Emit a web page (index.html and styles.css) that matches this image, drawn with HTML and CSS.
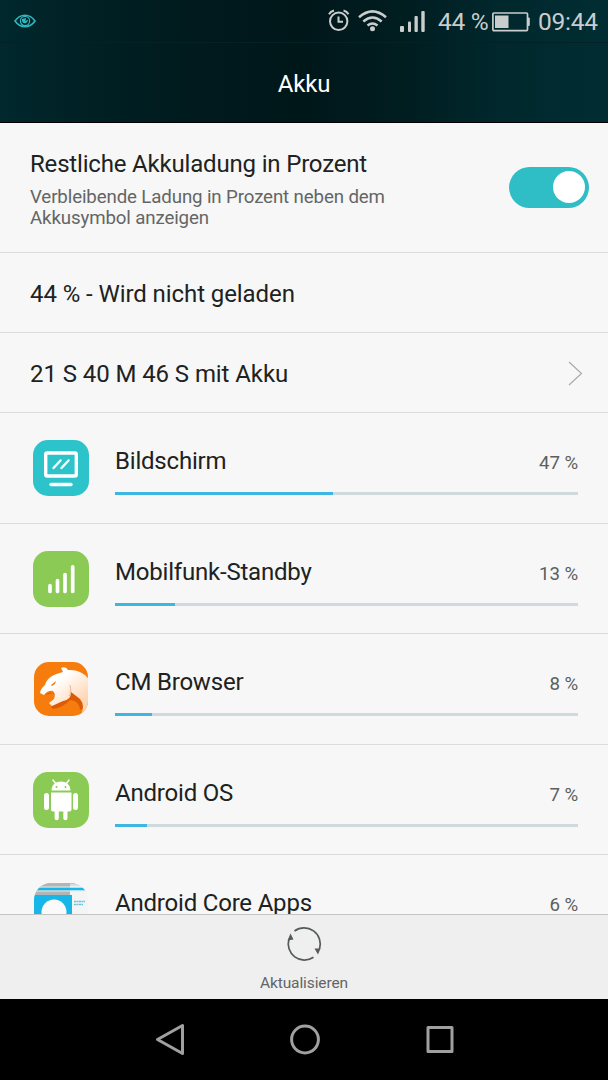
FILE: index.html
```html
<!DOCTYPE html>
<html lang="de">
<head>
<meta charset="utf-8">
<title>Akku</title>
<link rel="stylesheet" href="styles.css">
</head>
<body>
<div class="screen">
  <header class="top">
    <div class="status">
      <svg class="eye" width="22" height="14" viewBox="0 0 22 14" fill="none" stroke="#2fb8c2" stroke-width="1.600"><path d="M1 7Q5 1.300 11 1.300T21 7Q17 12.700 11 12.700T1 7Z"/><circle cx="11" cy="7" r="4.600" stroke-width="1.200"/><path d="M8 5q-.5 4.500 3.500 4.200Q14 8.500 14 5.500L11.500 7 12 4Z" fill="#2fb8c2" stroke="none"/></svg>
      <svg class="alarm" width="22" height="23" viewBox="0 0 22 23" fill="none" stroke="#c9cdcd" stroke-width="2"><circle cx="10.700" cy="12.300" r="8.700"/><path d="M10.500 7.500v5.300h4.500M1 5.200Q2.500 2.300 6 1.500M15.500 1.500Q19 2.300 20.500 5.200"/></svg>
      <svg class="wifi" width="29" height="22" viewBox="0 0 29 22" fill="none" stroke="#c9cdcd" stroke-width="2.500"><path d="M1 7.300Q14.500-4.500 28 7.300M5.300 11.500Q14.500 3.500 23.700 11.500M9.500 15.500Q14.500 11.500 19.500 15.500"/><circle cx="14.500" cy="18.700" r="2.500" fill="#c9cdcd" stroke="none"/></svg>
      <svg class="signal" width="25" height="21" viewBox="0 0 25 21" fill="#c9cdcd"><rect y="15" width="4" height="6" rx="1"/><rect x="8" y="10.500" width="3" height="10.500" rx="1"/><rect x="14.500" y="5" width="3.300" height="16" rx="1"/><rect x="21.300" width="3.400" height="21" rx="1"/></svg>
      <span class="charge">44 %</span>
      <svg class="battery" width="38" height="20" viewBox="0 0 38 20"><rect x=".9" y="1" width="34.600" height="17.600" rx="1" fill="none" stroke="#c9cdcd" stroke-width="1.700"/><rect x="3" y="3.500" width="13.500" height="12.500" fill="#c9cdcd"/><rect x="35.500" y="5.500" width="2.300" height="8.500" rx="1" fill="#c9cdcd"/></svg>
      <span class="clock">09:44</span>
    </div>
    <h1 class="title">Akku</h1>
  </header>
  <main class="list">
    <section class="setting">
      <div>
        <div class="label">Restliche Akkuladung in Prozent</div>
        <div class="hint">Verbleibende Ladung in Prozent neben dem<br>Akkusymbol anzeigen</div>
      </div>
      <div class="toggle"><div class="knob"></div></div>
    </section>
    <section class="line charge-state"><span class="label">44 % - Wird nicht geladen</span></section>
    <section class="line runtime"><span class="label">21 S 40 M 46 S mit Akku</span>
      <svg width="15" height="25" viewBox="0 0 15 25" fill="none" stroke="#aaa" stroke-width="1.200"><path d="M1 1 13.500 12.500 1 24"/></svg></section>

    <section class="usage">
      <svg class="icon" width="56" height="56" viewBox="0 0 56 56"><rect width="56" height="56" rx="15" fill="#2dc3ca"/><g fill="none" stroke="#fff" stroke-width="3.400" stroke-linecap="round" stroke-linejoin="round"><rect x="12.700" y="13" width="30.600" height="23" rx="1.500"/><path d="M18 44.500h20"/><path d="m20.500 28 7-7.500M28.500 28l7-7.500" stroke-width="2.400"/></g></svg>
      <div class="detail"><div class="row"><span class="label">Bildschirm</span><span class="value">47 %</span></div><div class="bar"><div class="fill" style="width:47%"></div></div></div>
    </section>
    <section class="usage">
      <svg class="icon" width="56" height="56" viewBox="0 0 56 56"><rect width="56" height="56" rx="15" fill="#8aca55"/><path d="M17 34.500v6M24.500 29.500v11M32 23.500v17M39.700 15.800v24.700" stroke="#fff" stroke-width="3.700" stroke-linecap="round"/></svg>
      <div class="detail"><div class="row"><span class="label">Mobilfunk-Standby</span><span class="value">13 %</span></div><div class="bar"><div class="fill" style="width:13%"></div></div></div>
    </section>
    <section class="usage">
      <svg class="icon" width="56" height="56" viewBox="0 0 56 56">
        <defs><clipPath id="cm"><rect x="1" y="1" width="54" height="54" rx="15"/></clipPath><linearGradient id="fur" x1="0" y1="0" x2=".8" y2="1"><stop offset=".35" stop-color="#fff"/><stop offset=".85" stop-color="#ffd6b3"/></linearGradient></defs>
        <g clip-path="url(#cm)"><path fill="#f67c0e" d="M0 0h56v56H0z"/><path fill="#dc5b06" d="M12 34Q18 29 22 34L24 39 18 46 20 48Q31 46 37 39 46 39 47 49L52 47 50 37 38 28Z"/><path fill="url(#fur)" d="M7 32Q8 27 12 24 14 17 21 14 26 12 30 11L28 7Q33 5 35 9 47 8 55 17V47L47 56Q53 45 47 38L38 31Q38 39 30 40L19 45 16 42 21 38Q23 33 20 30 15 29 11 34Z"/><path fill="#f67c0e" d="m18 24 5-4-1 3-3 2Z"/><path fill="none" stroke="#f5b585" d="M37 24Q39 32 36 35"/></g></svg>
      <div class="detail"><div class="row"><span class="label">CM Browser</span><span class="value">8 %</span></div><div class="bar"><div class="fill" style="width:8%"></div></div></div>
    </section>
    <section class="usage">
      <svg class="icon" width="56" height="56" viewBox="0 0 56 56"><rect width="56" height="56" rx="15" fill="#8aca55"/><g fill="#fff"><path d="M18.500 18.500C18.500 6.500 37.500 6.500 37.500 18.500ZM18 20.500h20.500v17q0 2-2 2H34.500v6.700a2 2 0 0 1-4.200 0v-6.700h-4.500v6.700a2 2 0 0 1-4.200 0v-6.700H20q-2 0-2-2Z"/><rect x="11" y="21" width="5" height="17" rx="2.500"/><rect x="40" y="21" width="5" height="17" rx="2.500"/></g><path d="m20 8 3 4M36 8l-3 4" stroke="#fff" stroke-width="1.500" stroke-linecap="round"/><g fill="#8aca55"><circle cx="23.500" cy="15" r="1"/><circle cx="32.500" cy="15" r="1"/></g></svg>
      <div class="detail"><div class="row"><span class="label">Android OS</span><span class="value">7 %</span></div><div class="bar"><div class="fill" style="width:7%"></div></div></div>
    </section>
    <section class="usage">
      <svg class="icon" width="56" height="56" viewBox="0 0 56 56"><defs><clipPath id="core"><rect x="1" y="1" width="54" height="54" rx="17"/></clipPath></defs><g clip-path="url(#core)"><path fill="#f3f4f4" d="M0 0h56v56H0z"/><path fill="#b1b5b5" d="M0 0h37v13H0z"/><path fill="#d8dddd" d="M37 0h19v4H37z"/><path fill="#16b6e9" d="M0 5.500h56v3H0zM0 13h39v43H0z"/><path fill="#e2eef1" d="M0 4.500h56v1H0zM0 8.500h56v1H0z"/><circle cx="21" cy="30" r="12.500" fill="#fafafa"/><path stroke="#60c5dc" stroke-width="1.500" stroke-dasharray="2 .5" d="M41 19.500h11M41 22.500h9"/><path stroke="#9fcf7a" d="M14 1.300h28"/></g></svg>
      <div class="detail"><div class="row"><span class="label">Android Core Apps</span><span class="value">6 %</span></div><div class="bar"><div class="fill" style="width:6%"></div></div></div>
    </section>
  </main>
  <footer class="actions">
    <svg width="36" height="36" viewBox="0 0 36 36" fill="none" stroke="#555b59" stroke-width="1.700"><path d="M8.500 5A16.200 16.200 0 0 1 33.500 23M27.500 31.300A16.200 16.200 0 0 1 3 13"/><path fill="#555b59" stroke="none" d="M4.500 7.500 1.500 14.500 7.500 13.500ZM28.500 22.500H34.500L32 28.500Z"/></svg>
    <span>Aktualisieren</span>
  </footer>
  <nav class="nav">
    <svg width="30" height="32" viewBox="0 0 30 32"><path d="M27.500 2.500v28L2.500 16.500Z"/></svg>
    <svg width="30" height="32" viewBox="0 0 30 32"><circle cx="15" cy="16.500" r="13.400"/></svg>
    <svg width="30" height="32" viewBox="0 0 30 32"><rect x="3" y="4.500" width="24" height="24"/></svg>
  </nav>
</div>
</body>
</html>
```
FILE: styles.css
```css
* { box-sizing: border-box; }
body { margin: 0; font-family: Roboto, "Liberation Sans", sans-serif; background: #000; }
svg { display: block; flex: none; }
.screen { width: 608px; height: 1080px; display: flex; flex-direction: column; overflow: hidden; }

.top { flex: none; height: 123px; background: linear-gradient(90deg, #00282d 0, #002125 80px, #001a1d 200px, #00171a 304px, #001e21 410px, #00282d 500px, #002d33 608px); border-bottom: 1px solid #000; }
.status { height: 43px; display: flex; align-items: flex-start; color: #c9cdcd; font-size: 24.500px; line-height: 28px; letter-spacing: -.25px; white-space: nowrap; border-bottom: 1px solid #022225; }
.eye { margin: 14px 0 0 14px; }
.alarm { margin: 9px 0 0 292px; }
.wifi { margin: 10px 0 0 8px; }
.signal { margin: 11px 0 0 13px; }
.charge { width: 53px; margin: 8px 0 0 13px; }
.battery { margin: 12px 0 0 1px; }
.clock { margin: 8px 0 0 8px; }
.title { margin: 0; text-align: center; color: #fff; font-size: 24px; font-weight: 400; line-height: 82px; letter-spacing: -.2px; }

.list { flex: none; height: 791px; overflow: hidden; background: #f7f7f7; color: #202221; }
.label { font-size: 24px; line-height: 28px; letter-spacing: -.18px; white-space: nowrap; }
.line .label { letter-spacing: -.08px; }
.setting { height: 130px; padding: 27px 19px 0 30px; display: flex; justify-content: space-between; border-bottom: 1px solid #dcdcdc; }
.hint { margin-top: 9px; font-size: 18.700px; line-height: 21px; letter-spacing: -.13px; color: #636665; white-space: nowrap; }
.toggle { width: 80px; height: 41px; margin-top: 17px; padding: 4px; border-radius: 21px; background: #30bec6; display: flex; justify-content: flex-end; }
.knob { width: 32px; height: 32px; border-radius: 50%; background: #fff; }
.line { height: 80px; padding: 2px 25px 0 30px; display: flex; align-items: center; justify-content: space-between; border-bottom: 1px solid #dcdcdc; }
.usage { height: 110.500px; padding: 27px 30px 0 33px; display: flex; gap: 26px; border-bottom: 1px solid #dcdcdc; }
.usage .label { letter-spacing: -.2px; }
.detail { flex: 1; padding-top: 7px; }
.row { height: 28px; display: flex; justify-content: space-between; align-items: baseline; }
.value { font-size: 18.700px; line-height: 28px; letter-spacing: -.1px; color: #5c5f5e; }
.bar { height: 3px; margin-top: 17px; background: #cfdadc; }
.fill { height: 100%; background: #3db7e2; }

.actions { flex: none; height: 85px; padding-top: 11px; display: flex; flex-direction: column; align-items: center; background: #efefef; border-top: 1px solid #c4c4c4; color: #626565; font-size: 15.500px; line-height: 20px; letter-spacing: -.1px; }
.actions span { margin-top: 11px; }
.nav { flex: 1; padding: 24px 153px 0 155px; display: flex; justify-content: space-between; background: #000; fill: none; stroke: #a0a0a0; stroke-width: 3px; stroke-linejoin: round; }
```
